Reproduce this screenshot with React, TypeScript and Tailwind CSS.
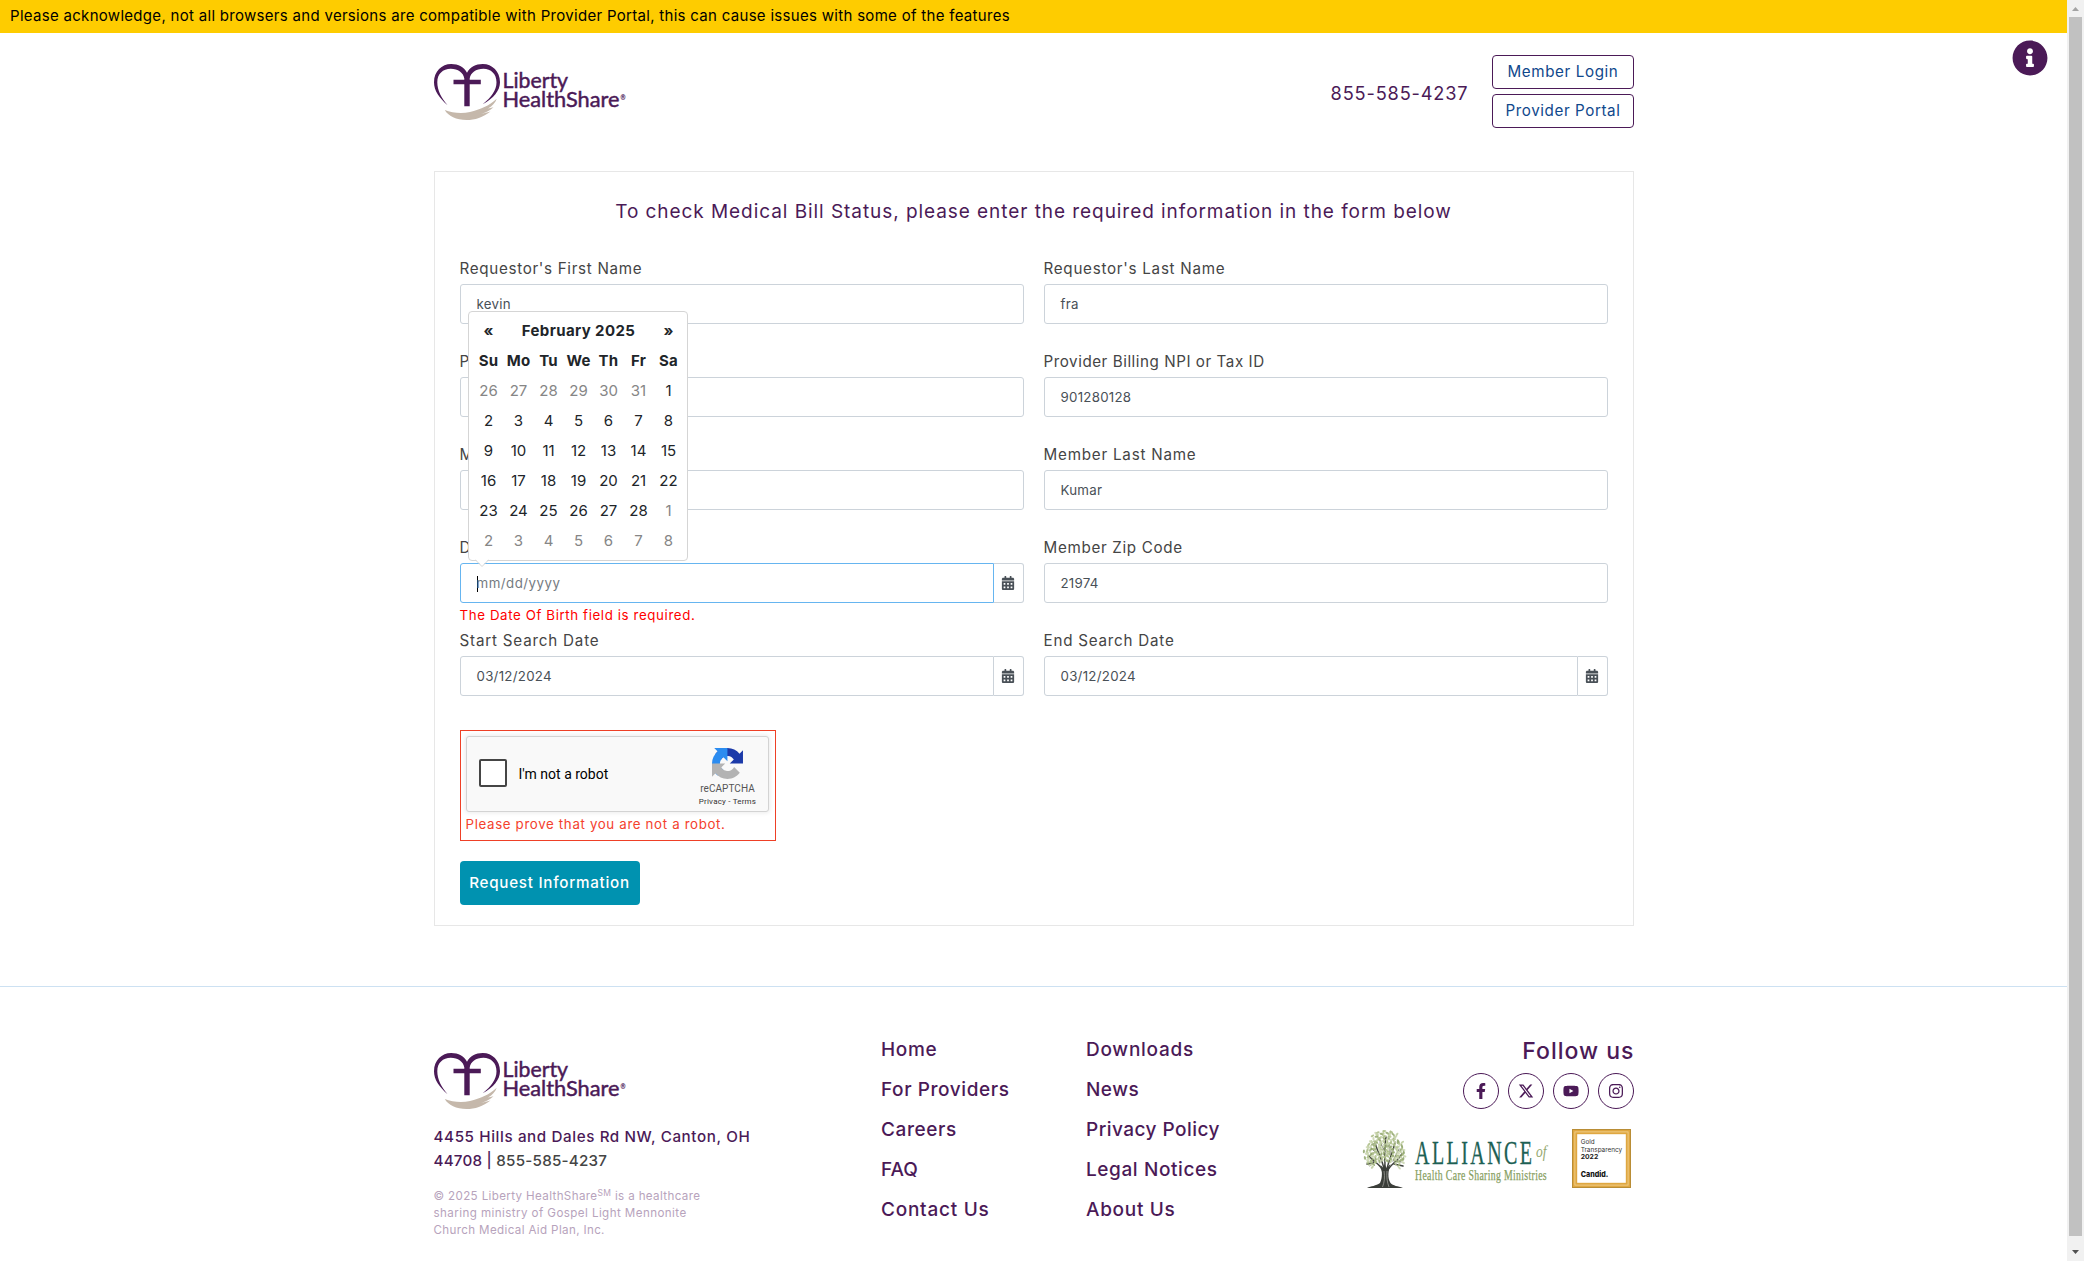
import { ReactNode } from 'react';
import { FaCalendarAlt, FaFacebookF, FaInfoCircle, FaInstagram, FaYoutube } from 'react-icons/fa';
import { FaXTwitter } from 'react-icons/fa6';

function Logo() {
  return (
    <svg width="194" height="56" viewBox="0 0 194 56" className="block shrink-0 overflow-visible">
      <path
        fill="#4b1a57"
        d="M13.6 41.2C5 33.5 0 26.5 0 18.2C0 7.5 7.8 0 17.2 0C24.4 0 30.2 3.2 33 8.8C35.8 3.2 41.6 0 48.8 0C58.2 0 66 7.500 66 18.200C66 26.500 59.500 34.500 48.700 40.300C57.500 33 62.500 26 62.500 18.200C62.500 10 57 4.800 49.400 4.800C42 4.800 36.500 8.800 35.700 14.500V15.700H46.800V20.300H35.700V42.200H30.300V20.300H19.500V15.700H30.300V14.500C29.500 8.800 24 4.800 16.800 4.800C8.800 4.800 3.300 10 3.300 18.200C3.300 26.500 7.500 34 13.600 41.200Z"
      />
      <path
        fill="#c5b8ab"
        d="M10.800 46C18 49 28 50 36 48C46.500 45.500 55 42 62.700 34.800C61.500 38.600 58.500 42 54 44.600L59.500 43.200C56 46.500 52 48.600 47 50L56.500 47.500C49 53.500 41 56 32.500 56C22.500 56 14 52 10.800 46Z"
      />
      <g fill="#4b1a57" stroke="#4b1a57" strokeWidth="0.450" fontFamily="Lato, sans-serif">
        <text x="68.500" y="23.600" fontSize="20.500" textLength="65.500" lengthAdjust="spacingAndGlyphs">Liberty</text>
        <text x="68.500" y="43.400" fontSize="20.500" textLength="117" lengthAdjust="spacingAndGlyphs">HealthShare</text>
        <text x="186.500" y="36" fontSize="8" strokeWidth="0.200" textLength="5" lengthAdjust="spacingAndGlyphs">®</text>
      </g>
    </svg>
  );
}

function RecaptchaMark() {
  return (
    <svg width="31" height="31" viewBox="0 0 64 64">
      <path fill="#1c3aa9" d="M64 31.955l-.033-1.370V4.687l-7.160 7.160C50.948 4.674 42.033.093 32.050.093c-10.400 0-19.622 4.960-25.458 12.640l11.736 11.860a15.550 15.550 0 0 1 4.754-5.334c2.050-1.600 4.952-2.906 8.968-2.906.485 0 .860.057 1.135.163 4.976.393 9.288 3.140 11.828 7.124l-8.307 8.307L64 31.953" />
      <path fill="#2b8cf0" d="M31.862.094l-1.370.033H4.594l7.160 7.160C4.580 13.147 0 22.060 0 32.046c0 10.400 4.960 19.622 12.640 25.458L24.500 45.768a15.550 15.550 0 0 1-5.334-4.754c-1.600-2.050-2.906-4.952-2.906-8.968 0-.485.057-.860.163-1.135.393-4.976 3.140-9.288 7.124-11.828l8.307 8.307L31.860.095" />
      <path fill="#b3b3b3" d="M.001 32.045l.033 1.370v25.898l7.160-7.160c5.860 7.173 14.774 11.754 24.760 11.754 10.400 0 19.622-4.960 25.458-12.640l-11.736-11.860a15.550 15.550 0 0 1-4.754 5.334c-2.050 1.600-4.952 2.906-8.968 2.906-.485 0-.860-.057-1.135-.163-4.976-.393-9.288-3.140-11.828-7.124l8.307-8.307c-10.522.040-22.400.066-27.295-.005" />
    </svg>
  );
}

const leafColors = ['#a9bb84', '#bccb9c', '#8fa56b', '#c9d5ae'];
const leaves = Array.from({ length: 190 }, (_, i) => {
  const r = Math.sqrt((i + 0.5) / 190);
  const a = i * 2.39996;
  const x = 22 + Math.cos(a) * r * 20.5 + Math.sin(i * 3.1) * 1.2;
  const y = 21 + Math.sin(a) * r * 19.5 + (Math.abs(Math.cos(a)) * r > 0.6 ? 3.5 : 0);
  return { x, y, c: leafColors[(i * 7) % 4], rot: (i * 47) % 180 };
}).filter((l) => !(l.y > 33 && Math.abs(l.x - 22) < 9));

function AllianceLogo() {
  return (
    <svg width="186" height="60" viewBox="0 0 186 60" className="block overflow-visible">
      <g stroke="#3f423c" fill="none" strokeLinecap="round">
        <path strokeWidth="1.500" d="M20 44C19 36 13 35 6 27M21 40C19 30 15 24 12 14M22 40C22 28 21 18 23 8M24 40C26 30 30 24 32 13M24 43C27 35 33 34 39 25M13 33L4 35M31 35L40 37" />
        <path strokeWidth="0.800" d="M16 26L8 19M21.500 22L17 13M27 26L27 17M30 32L36 20M11 31L7 37M34 32L38 33" />
      </g>
      {leaves.map((l, i) => (
        <ellipse key={i} cx={l.x} cy={l.y} rx="1.900" ry="1.050" fill={l.c} opacity="0.850" transform={`rotate(${l.rot} ${l.x} ${l.y})`} />
      ))}
      <path fill="#3b3e39" d="M17.500 36C19.500 42 19.500 49 17 54C13 57 8 57 4 59H40C35 57 30 57 27.500 54C24.500 49 25 42 27.500 35L23.500 39L21.500 35L20.500 39Z" />
      <path stroke="#9a9c97" strokeWidth="0.800" fill="none" d="M21 42C22 48 21.500 53 19.500 58M24 42C23.500 48 24 53 26 58" />
      <g fontFamily="'Liberation Serif', serif">
        <text x="52" y="35" fontSize="33" letterSpacing="4" fill="#1d6154" stroke="#1d6154" strokeWidth="0.300" textLength="119.500" lengthAdjust="spacingAndGlyphs">ALLIANCE</text>
        <text x="173" y="28" fontSize="17" fontStyle="italic" fill="#94a86f" textLength="10.500" lengthAdjust="spacingAndGlyphs">of</text>
        <text x="52" y="51.300" fontSize="14.500" letterSpacing="0.500" fill="#87a05f" stroke="#87a05f" strokeWidth="0.250" textLength="132" lengthAdjust="spacingAndGlyphs">Health Care Sharing Ministries</text>
      </g>
    </svg>
  );
}

function CandidSeal() {
  return (
    <svg width="59" height="59" viewBox="0 0 59 59" className="block">
      <rect width="59" height="59" fill="#b98d36" />
      <rect x="1" y="1" width="57" height="57" fill="#dfa741" />
      <rect x="2.900" y="2.900" width="53.200" height="53.200" fill="none" stroke="#f0d08d" strokeWidth="0.900" />
      <rect x="5.200" y="5.200" width="48.600" height="48.600" fill="#fff" />
      <g fontFamily="Inter, sans-serif" fill="#333">
        <text x="8.700" y="15" fontSize="6.500" textLength="14" lengthAdjust="spacingAndGlyphs">Gold</text>
        <text x="8.700" y="22.700" fontSize="6.500" textLength="41.500" lengthAdjust="spacingAndGlyphs">Transparency</text>
        <text x="8.700" y="30.200" fontSize="6.500" fontWeight="700" fill="#222" textLength="17.500" lengthAdjust="spacingAndGlyphs">2022</text>
        <text x="8.700" y="48.400" fontSize="7.800" fontWeight="800" fill="#111" textLength="27.500" lengthAdjust="spacingAndGlyphs">Candid.</text>
      </g>
    </svg>
  );
}

function Field({ label, labelClass = 'tracking-[0.680px]', value, date, active, error, children }: {
  label: string; labelClass?: string; value?: string; date?: boolean; active?: boolean; error?: string; children?: ReactNode;
}) {
  return (
    <div className="relative h-[93px]">
      <div className={`h-6 pt-px text-[15.200px] leading-6 whitespace-nowrap text-[#454545] ${labelClass}`}>{label}</div>
      <div className="mt-1 flex h-10">
        <div
          className={`flex flex-1 items-center border bg-white pt-px pl-4 text-[13.300px] ${active ? 'border-[#66b5f0] text-[#757b81]' : 'border-[#ccd3da] text-[#495057]'} ${date ? 'rounded-l-[3px]' : 'rounded-[3px]'}`}
        >
          {active && <span className="-mr-px h-4 w-px bg-black" />}
          <span className={active ? 'tracking-[0.490px]' : 'tracking-[0.260px]'}>{value}</span>
        </div>
        {date && (
          <div className="flex w-[30px] items-center justify-center rounded-r-[3px] border border-l-0 border-[#ccd3da] text-[14px] text-[#495057]">
            <FaCalendarAlt />
          </div>
        )}
      </div>
      {error && <div className="mt-[2px] h-5 text-[13.300px] leading-5 tracking-[0.610px] text-[#ff0000]">{error}</div>}
      {children}
    </div>
  );
}

const weeks = [
  [26, 27, 28, 29, 30, 31, 1],
  [2, 3, 4, 5, 6, 7, 8],
  [9, 10, 11, 12, 13, 14, 15],
  [16, 17, 18, 19, 20, 21, 22],
  [23, 24, 25, 26, 27, 28, 1],
  [2, 3, 4, 5, 6, 7, 8],
];

function Calendar() {
  return (
    <div className="absolute bottom-[67px] left-2 z-10 w-[220px] rounded-[4px] border border-[#d5d5d5] bg-white py-1 pr-[3px] pl-[5px] text-[15px] text-[#212529]">
      <div className="grid grid-cols-[30px_1fr_30px] text-center leading-[30px] font-bold">
        <span>«</span>
        <span className="tracking-[0.400px]">February 2025</span>
        <span>»</span>
      </div>
      <div className="grid grid-cols-7 text-center leading-[30px] font-bold tracking-[0.200px]">
        {['Su', 'Mo', 'Tu', 'We', 'Th', 'Fr', 'Sa'].map((d) => <span key={d}>{d}</span>)}
      </div>
      {weeks.map((w, r) => (
        <div key={r} className="grid grid-cols-7 text-center leading-[30px]">
          {w.map((d, c) => {
            const muted = (r === 0 && d > 20) || (r === 4 && d === 1) || r === 5;
            return <span key={c} className={muted ? 'text-[#868686]' : ''}>{d}</span>;
          })}
        </div>
      ))}
      <svg width="14" height="8" viewBox="0 0 14 8" className="absolute -bottom-[7px] left-[6px]">
        <path d="M0 0L7 7L14 0Z" fill="#fff" />
        <path d="M0 0.500L7 7.500L14 0.500" fill="none" stroke="#d5d5d5" />
      </svg>
    </div>
  );
}

const linksA: [string, string][] = [
  ['Home', 'tracking-[0.700px]'], ['For Providers', 'tracking-[0.590px]'], ['Careers', 'tracking-[0.600px]'], ['FAQ', 'tracking-[0px]'], ['Contact Us', 'tracking-[0.750px]'],
];
const linksB: [string, string][] = [
  ['Downloads', 'tracking-[0.750px]'], ['News', 'tracking-[0.500px]'], ['Privacy Policy', 'tracking-[0.470px]'], ['Legal Notices', 'tracking-[0.600px]'], ['About Us', 'tracking-[0.700px]'],
];

function LinkColumn({ items }: { items: [string, string][] }) {
  return (
    <div className="w-[205px] pt-px">
      {items.map(([t, c]) => (
        <div key={t} className={`h-10 text-[19px] leading-10 font-medium whitespace-nowrap ${c}`}>{t}</div>
      ))}
    </div>
  );
}

export default function App() {
  return (
    <div className="flex h-[1261px] w-[2084px] overflow-hidden bg-white font-[Inter,sans-serif]">
      <main className="w-[2067px] text-[#4b1a57]">
        <div className="h-[33px] bg-[#fecc00] pl-[10px] text-[15px] leading-[32px] tracking-[0.300px] text-black">
          Please acknowledge, not all browsers and versions are compatible with Provider Portal, this can cause issues with some of the features
        </div>

        <header className="relative h-[138px]">
          <div className="mx-auto flex h-[118px] w-[1200px] items-center justify-between">
            <Logo />
            <div className="mb-px flex items-center gap-[23px]">
              <span className="pt-[5px] text-[18.200px] tracking-[0.840px]">855-585-4237</span>
              <div className="flex flex-col gap-[5px] text-center text-[15.200px] text-[#10488c]">
                <span className="h-[34px] w-[142px] rounded-[4px] border border-[#4b1a57] pl-px leading-8 tracking-[0.600px]">Member Login</span>
                <span className="h-[34px] w-[142px] rounded-[4px] border border-[#4b1a57] pl-px leading-8 tracking-[0.580px]">Provider Portal</span>
              </div>
            </div>
          </div>
          <FaInfoCircle className="absolute top-[7px] right-[19px] size-[36px]" />
        </header>

        <section className="mx-auto h-[755px] w-[1200px] border border-[#e7e7e7] px-[25px] pt-[25px]">
          <h1 className="mb-[29px] h-[30px] text-center text-[19px] leading-[30px] tracking-[0.940px]">
            To check Medical Bill Status, please enter the required information in the form below
          </h1>
          <div className="grid grid-cols-2 gap-x-5">
            <Field label="Requestor's First Name" value="kevin" />
            <Field label="Requestor's Last Name" labelClass="tracking-[0.730px]" value="fra" />
            <Field label="Provider Name" />
            <Field label="Provider Billing NPI or Tax ID" labelClass="tracking-[0.540px]" value="901280128" />
            <Field label="Member First Name" />
            <Field label="Member Last Name" labelClass="tracking-[0.780px]" value="Kumar" />
            <Field label="Date Of Birth" value="mm/dd/yyyy" date active error="The Date Of Birth field is required.">
              <Calendar />
            </Field>
            <Field label="Member Zip Code" value="21974" />
            <Field label="Start Search Date" labelClass="tracking-[0.800px]" value="03/12/2024" date />
            <Field label="End Search Date" labelClass="tracking-[0.770px]" value="03/12/2024" date />
          </div>

          <div className="mt-[9px] h-[111px] w-[316px] border border-[#ee4026] p-[5px]">
            <div className="flex h-[76px] w-[303px] items-center rounded-[3px] border border-[#d3d3d3] bg-[#f9f9f9] pl-3 font-[Roboto,sans-serif] text-black shadow-[0_0_4px_1px_rgba(0,0,0,0.08)]">
              <span className="mb-[2px] size-7 rounded-[2px] border-2 border-[#454545] bg-white" />
              <span className="ml-3 flex-1 text-[14px]">I'm not a robot</span>
              <div className="mr-[9px] flex w-[62px] flex-col items-center pt-[6px] text-[#555]">
                <RecaptchaMark />
                <span className="mt-[2px] text-[10px] leading-4 tracking-[0.050px]">reCAPTCHA</span>
                <span className="text-[8px] leading-[9px] tracking-[0.200px] whitespace-nowrap text-[#333]">Privacy - Terms</span>
              </div>
            </div>
            <div className="mt-[2px] text-[13.300px] leading-5 tracking-[0.650px] whitespace-nowrap text-[#f4412d]">Please prove that you are not a robot.</div>
          </div>

          <button className="mt-5 block h-11 w-[180px] rounded-[4px] bg-[#0092b0] pt-px text-center text-[15.200px] font-medium tracking-[0.740px] whitespace-nowrap text-white">
            Request Information
          </button>
        </section>

        <footer className="mt-[60px] border-t border-[#cde1f2]">
          <div className="mx-auto flex w-[1200px] items-start pt-[42px]">
            <div className="w-[447.500px] pt-6">
              <Logo />
              <p className="mt-4 text-[15.200px] leading-6 font-medium tracking-[0.600px]">
                4455 Hills and Dales Rd NW, Canton, OH
                <br />
                <span className="tracking-[0.220px]">44708 | <span className="text-[#454545]">855-585-4237</span></span>
              </p>
              <p className="mt-[15px] text-[11.600px] leading-[17px] tracking-[0.360px] text-[#b7a3bc]">
                © 2025 Liberty HealthShare<sup className="text-[8.500px] leading-none">SM</sup> is a healthcare
                <br />
                <span className="tracking-[0.420px]">sharing ministry of Gospel Light Mennonite</span>
                <br />
                Church Medical Aid Plan, Inc.
              </p>
            </div>
            <LinkColumn items={linksA} />
            <LinkColumn items={linksB} />
            <div className="ml-auto flex flex-col items-end pt-1">
              <div className="-mr-px h-9 text-[23px] leading-9 font-medium tracking-[1px]">Follow us</div>
              <div className="mt-1 flex gap-[9px] text-[16px]">
                {[FaFacebookF, FaXTwitter, FaYoutube, FaInstagram].map((Icon, i) => (
                  <span key={i} className="flex size-9 items-center justify-center rounded-full border border-[#4b1a57]">
                    <Icon />
                  </span>
                ))}
              </div>
              <div className="mt-5 mr-[3px] flex items-start gap-[23px]">
                <AllianceLogo />
                <CandidSeal />
              </div>
            </div>
          </div>
        </footer>
      </main>

      <aside className="flex w-[17px] flex-col items-center justify-between bg-[#f1f1f1]">
        <svg width="17" height="17" viewBox="0 0 17 17"><path d="M5 11L8.500 7L12 11Z" fill="#a3a3a3" /></svg>
        <div className="h-[1219px] w-[13px] bg-[#c1c1c1]" />
        <svg width="17" height="25" viewBox="0 0 17 25"><path d="M5 14L8.500 18L12 14Z" fill="#505050" /></svg>
      </aside>
    </div>
  );
}
